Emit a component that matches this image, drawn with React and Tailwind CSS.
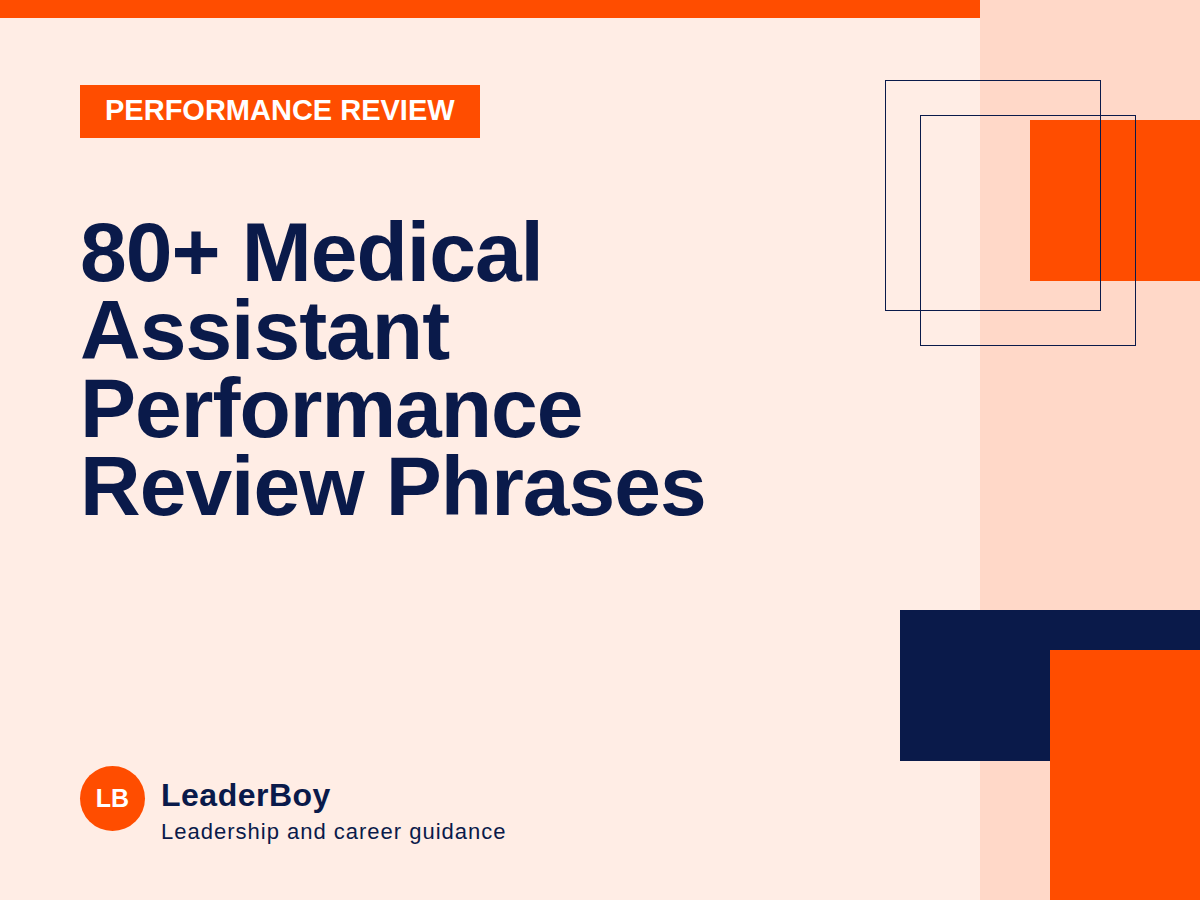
export default function App() {
  return (
    <div className="relative w-[1200px] h-[900px] overflow-hidden bg-[#FFEDE5] flex">
      <div className="w-[980px] h-full flex flex-col">
        <div className="h-[18px] w-full bg-[#FF4D00]" />
        <div className="flex flex-col items-start pl-[80px]">
          <div className="mt-[67px] h-[53px] px-[25px] pb-[3px] flex items-center bg-[#FF4D00] text-white font-bold text-[29px] leading-none" style={{ fontFamily: '"Liberation Sans", Arial, sans-serif' }}>
            PERFORMANCE REVIEW
          </div>
          <h1 className="mt-[75px] text-[#0A1A4A] font-bold text-[84px] leading-[78px] tracking-[-1px]" style={{ fontFamily: '"Liberation Sans", Arial, sans-serif' }}>
            80+ Medical<br />Assistant<br />Performance<br />Review Phrases
          </h1>
        </div>
        <div className="mt-auto mb-[54px] pl-[80px] flex items-start gap-4" style={{ fontFamily: '"Liberation Sans", Arial, sans-serif' }}>
          <div className="w-[65px] h-[65px] rounded-full bg-[#FF4D00] flex items-center justify-center text-white font-bold text-[25px] leading-none">
            LB
          </div>
          <div className="mt-[11px] flex flex-col text-[#0A1A4A]">
            <div className="font-bold text-[32px] leading-[36px] tracking-[0.5px]">LeaderBoy</div>
            <div className="mt-[5px] text-[22px] leading-[28px] tracking-[1px]">Leadership and career guidance</div>
          </div>
        </div>
      </div>
      <div className="w-[220px] h-full bg-[#FFD8C8]" />

      <div className="absolute left-[1030px] top-[120px] w-[170px] h-[161px] bg-[#FF4D00]" />
      <div className="absolute left-[885px] top-[80px] w-[216px] h-[231px] border border-[#0A1A4A]" />
      <div className="absolute left-[920px] top-[115px] w-[216px] h-[231px] border border-[#0A1A4A]" />

      <div className="absolute left-[900px] top-[610px] w-[300px] h-[151px] bg-[#0A1A4A]" />
      <div className="absolute left-[1050px] top-[650px] w-[150px] h-[250px] bg-[#FF4D00]" />
    </div>
  );
}
